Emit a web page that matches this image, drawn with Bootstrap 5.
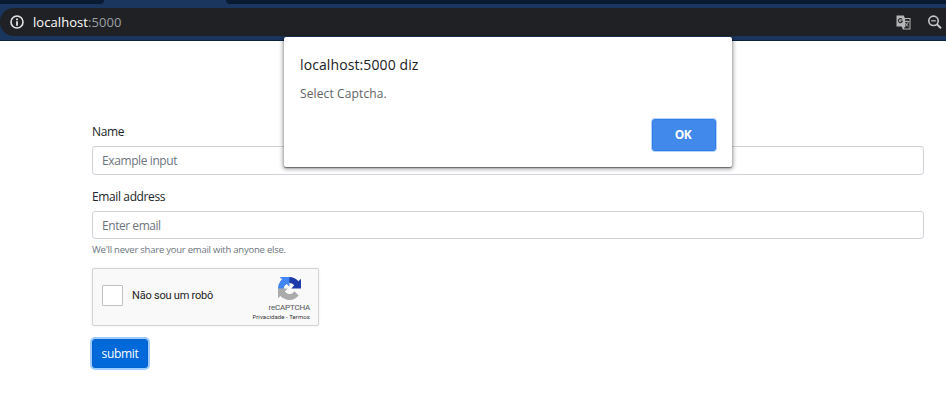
<!DOCTYPE html>
<html lang="pt-BR">
<head>
<meta charset="utf-8">
<meta name="viewport" content="width=device-width, initial-scale=1">
<title>localhost:5000</title>
<link href="https://cdn.jsdelivr.net/npm/bootstrap@5.3.0/dist/css/bootstrap.min.css" rel="stylesheet">
<style>
body{font-family:"Open Sans","Noto Sans",sans-serif;font-size:12px;line-height:18px;color:#212529;height:411px;overflow:hidden}
.browser-bar{height:41px;background:#1a355e;border-bottom:1px solid #0d2143}
.tab-strip{height:4px}
.tab-rest{background:#0b1a33}
.tab-before{width:104px;border-bottom-right-radius:4px}
.tab-current{width:122px}
.tab-after{border-bottom-left-radius:4px}
.address{height:28px;margin-top:4px;background:#202124;border-radius:14px 0 0 14px;padding:0 3px 0 10px}
.url{font-size:13px;color:#fff;margin-left:8px;letter-spacing:.06px}
.url span{color:#9aa0a6}
.form-area{padding:82px 22px 0 92px}
.form-area .form-label{margin-bottom:5px;letter-spacing:-.38px}
.form-area .form-control{font-size:12px;line-height:18px;height:29px;padding:4px 9px;border-color:#ced4da;border-radius:3px;letter-spacing:-.4px}
.form-area #email{height:28px;letter-spacing:-.45px}
.form-control::placeholder{color:#6c757d}
.field-name{margin-bottom:13px}
.form-area .form-text{font-size:9.5px;line-height:14px;margin-top:4px;color:#6c757d;letter-spacing:-.23px}
.captcha{width:227px;height:58px;margin-top:11px;background:#f9f9f9;border:1px solid #d3d3d3;border-radius:2px;box-shadow:0 0 3px rgba(0,0,0,.08);font-family:Roboto,sans-serif;padding:0 8px 0 9px}
.tick{width:21px;height:21px;border:1px solid #c1c1c1;border-radius:1px;background:#fff}
.robot{font-size:11px;color:#222;margin:1px 0 0 9px;letter-spacing:-.22px}
.brand{padding-top:8px;color:#555}
.brand-title{font-size:8px;line-height:11px;margin-top:2px;letter-spacing:-.2px}
.brand-links{font-size:6px;line-height:8px;color:#333;letter-spacing:.08px}
.brand-mark{margin-right:9px}
.submit-btn{margin-top:13px;width:56px;height:29px;font:12px/18px "Open Sans",sans-serif;padding:0;background:#0069d9;border:1px solid #0062cc;border-radius:3px;box-shadow:0 0 0 2px #9fcdff!important;letter-spacing:-.3px}
.alert-box{position:absolute;left:284px;top:37px;width:448px;height:130px;background:#fff;border-radius:2px;box-shadow:0 1px 1px rgba(0,0,0,.4),0 1px 4px 1px rgba(0,0,0,.4);padding:18px 16px 16px}
.alert-origin{font-size:14px;line-height:20px;color:#202124;letter-spacing:.1px}
.alert-message{font-size:12px;line-height:18px;color:#5f6368;margin-top:10px;letter-spacing:.12px}
.ok-btn{width:64px;height:32px;font:700 12px/18px "Open Sans",sans-serif;background:#4189eb;border:1px solid #2f7de7;border-radius:3px;padding:0 2px 0 0;box-shadow:0 0 0 1px #b5d3fa;letter-spacing:-.5px}
</style>
<script src="https://cdn.jsdelivr.net/npm/bootstrap@5.3.0/dist/js/bootstrap.bundle.min.js"></script>
</head>
<body class="bg-white position-relative">
<header class="browser-bar">
  <div class="tab-strip d-flex">
    <div class="tab-rest tab-before"></div><div class="tab-current"></div><div class="tab-rest tab-after flex-grow-1"></div>
  </div>
  <div class="address d-flex align-items-center">
    <svg width="15" height="15" viewBox="0 0 15 15"><circle cx="7" cy="7" r="6" fill="none" stroke="#e4e5e7" stroke-width="1.6"/><path d="M6.1 3.6h1.8v1.6H6.1zM6.1 6.3h1.8v4.4H6.1z" fill="#e4e5e7"/></svg>
    <div class="url">localhost<span>:5000</span></div>
    <svg class="ms-auto" width="15" height="15" viewBox="0 0 15 15"><path d="M.5 .5h7.3l1 2.5h5.7v11.5H6.8l-1-3H.5z" fill="#b5b6b7"/><path d="M9.1 4h4.4v9.5H7.8l1.8-2.4z" fill="#202124"/><path d="M6 4.5A2 2 0 1 0 6.3 6.1H4.5" fill="none" stroke="#303134" stroke-width="1.2"/><path d="M8.8 6.5h4.4M10.8 5.5v1M12.3 6.5c-.3 2-1.3 3.6-2.8 4.8M9.8 8c.5 1.5 1.3 2.8 2.8 3.8" fill="none" stroke="#b5b6b7" stroke-width=".9"/></svg>
    <svg class="ms-3" width="16" height="15" viewBox="0 0 16 15"><circle cx="6.5" cy="5.8" r="4.7" fill="none" stroke="#c6c7c8" stroke-width="1.6"/><path d="M4.2 5.8h4.6" stroke="#c6c7c8" stroke-width="1.2"/><path d="M9.8 9.1l4.2 4.2" stroke="#c6c7c8" stroke-width="2"/></svg>
  </div>
</header>
<main>
  <form class="form-area" onsubmit="return false">
    <div class="field-name">
      <label class="form-label d-block" for="name">Name</label>
      <input class="form-control" id="name" placeholder="Example input">
    </div>
    <div>
      <label class="form-label d-block" for="email">Email address</label>
      <input class="form-control" id="email" type="email" placeholder="Enter email">
      <div class="form-text">We'll never share your email with anyone else.</div>
    </div>
    <div class="captcha d-flex">
      <div class="d-flex align-items-center flex-grow-1 pb-1">
        <div class="tick"></div><div class="robot">Não sou um robô</div>
      </div>
      <div class="brand d-flex flex-column align-items-end">
        <svg class="brand-mark" width="23" height="23" viewBox="0 0 64 64">
          <path d="M64 31.955l-.033-1.37V4.687l-7.16 7.16C50.948 4.674 42.033.093 32.05.093c-10.4 0-19.622 4.96-25.458 12.64l11.736 11.86a15.55 15.55 0 0 1 4.754-5.334c2.05-1.6 4.952-2.906 8.968-2.906.485 0 .86.057 1.135.163 4.976.393 9.288 3.14 11.828 7.124l-8.307 8.307L64 31.953" fill="#1c3aa9"/>
          <path d="M31.862.094l-1.37.033H4.594l7.16 7.16C4.58 13.147 0 22.06 0 32.046c0 10.4 4.96 19.622 12.64 25.458L24.5 45.768a15.55 15.55 0 0 1-5.334-4.754c-1.6-2.05-2.906-4.952-2.906-8.968 0-.485.057-.86.163-1.135.393-4.976 3.14-9.288 7.124-11.828l8.307 8.307L31.86.095" fill="#4285f4"/>
          <path d="M.001 32.045l.033 1.37v25.898l7.16-7.16c5.86 7.173 14.774 11.754 24.76 11.754 10.4 0 19.622-4.96 25.458-12.64l-11.736-11.86a15.55 15.55 0 0 1-4.754 5.334c-2.05 1.6-4.952 2.906-8.968 2.906-.485 0-.86-.057-1.135-.163-4.976-.393-9.288-3.14-11.828-7.124l8.307-8.307c-10.522.04-22.4.066-27.295-.005" fill="#ababab"/>
        </svg>
        <div class="brand-title">reCAPTCHA</div>
        <div class="brand-links">Privacidade - Termos</div>
      </div>
    </div>
    <button class="btn btn-primary submit-btn d-block" type="submit">submit</button>
  </form>
</main>
<div class="alert-box d-flex flex-column" role="alertdialog">
  <div class="alert-origin">localhost:5000 diz</div>
  <div class="alert-message">Select Captcha.</div>
  <button class="btn btn-primary ok-btn mt-auto ms-auto" type="button">OK</button>
</div>
</body>
</html>
